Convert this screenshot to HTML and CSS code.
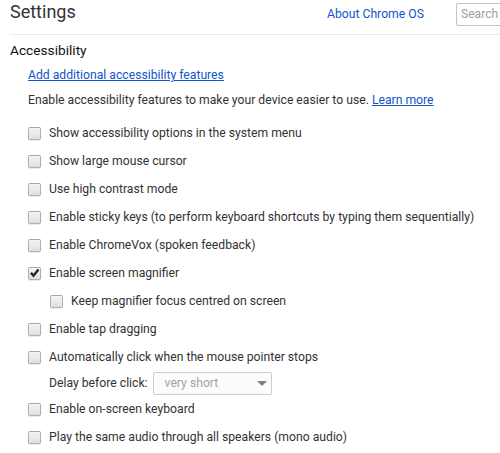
FILE: index.html
```html
<!DOCTYPE html>
<html lang="en">
<head>
<meta charset="utf-8">
<title>Settings</title>
<link rel="stylesheet" href="styles.css">
</head>
<body>
<header class="header">
  <h1 class="title">Settings</h1>
  <a class="about" href="#">About Chrome OS</a>
  <input class="search" type="search" placeholder="Search">
</header>
<main class="page">
  <h2 class="section-title">Accessibility</h2>
  <div class="section-body">
    <a class="link add" href="#">Add additional accessibility features</a>
    <p class="desc">Enable accessibility features to make your device easier to use. <a class="link" href="#">Learn more</a></p>
    <ul class="options">
      <li class="option"><span class="cb"></span><span class="label">Show accessibility options in the system menu</span></li>
      <li class="option"><span class="cb"></span><span class="label">Show large mouse cursor</span></li>
      <li class="option"><span class="cb"></span><span class="label">Use high contrast mode</span></li>
      <li class="option"><span class="cb"></span><span class="label">Enable sticky keys (to perform keyboard shortcuts by typing them sequentially)</span></li>
      <li class="option"><span class="cb"></span><span class="label">Enable ChromeVox (spoken feedback)</span></li>
      <li class="option"><span class="cb checked"><svg viewBox="0 0 13 13" width="13" height="13"><path d="M2 6.6 L4 4.9 L5.4 7 L9.5 1.8 L11.4 3.3 L5.5 10.6 Z" fill="#222"/></svg></span><span class="label">Enable screen magnifier</span></li>
      <li class="option nested"><span class="cb"></span><span class="label">Keep magnifier focus centred on screen</span></li>
      <li class="option"><span class="cb"></span><span class="label">Enable tap dragging</span></li>
      <li class="option"><span class="cb"></span><span class="label">Automatically click when the mouse pointer stops</span></li>
      <li class="delay"><span class="label">Delay before click:</span><span class="select"><span class="select-text">very short</span><span class="arrow"></span></span></li>
      <li class="option"><span class="cb"></span><span class="label">Enable on-screen keyboard</span></li>
      <li class="option"><span class="cb"></span><span class="label">Play the same audio through all speakers (mono audio)</span></li>
    </ul>
  </div>
</main>
</body>
</html>
```
FILE: styles.css
```css
html, body {
  margin: 0;
  padding: 0;
  overflow: hidden;
  background: #fff;
}
body {
  font-family: Roboto, "Liberation Sans", sans-serif;
  font-size: 12.2px;
  line-height: 16px;
  color: #333;
}
.header {
  display: flex;
  align-items: baseline;
  margin-left: 10px;
  height: 34px;
  border-bottom: 1px solid #ebebeb;
  overflow: hidden;
}
.title {
  flex: 0 0 317px;
  margin: 0;
  font-size: 18px;
  line-height: 24px;
  font-weight: normal;
  color: #333;
}
.about {
  flex: none;
  color: #1155cc;
  text-decoration: none;
}
.search {
  flex: none;
  margin-left: 32px;
  width: 160px;
  height: 23px;
  box-sizing: border-box;
  border: 1px solid #c4c4c4;
  border-radius: 2px;
  padding: 0 4px;
  font-family: Roboto, "Liberation Sans", sans-serif;
  font-size: 12.2px;
  color: #333;
  outline: none;
  -webkit-appearance: none;
  appearance: none;
}
.search::placeholder {
  color: #a0a0a0;
}
.section-title {
  margin: 5px 0 0 10px;
  font-size: 13.7px;
  line-height: 20px;
  font-weight: normal;
  color: #111;
}
.section-body {
  display: flex;
  flex-direction: column;
  align-items: flex-start;
  padding-left: 28px;
}
.link {
  color: #1155cc;
  text-decoration: underline;
}
.add {
  margin-top: 7px;
}
.desc {
  margin: 9px 0 0;
}
.options {
  list-style: none;
  margin: 11px 0 0;
  padding: 0;
}
.option {
  display: flex;
  align-items: center;
  gap: 8px;
  height: 28px;
}
.option.nested {
  padding-left: 22px;
}
.cb {
  flex: none;
  display: block;
  width: 13px;
  height: 13px;
  box-sizing: border-box;
  border: 1px solid rgba(0, 0, 0, 0.25);
  border-radius: 2px;
  background-image: linear-gradient(#ededed, #ededed 38%, #dedede);
  box-shadow: 0 1px 0 rgba(0, 0, 0, 0.08), inset 0 1px 2px rgba(255, 255, 255, 0.75);
  position: relative;
}
.cb svg {
  position: absolute;
  left: -1px;
  top: -1px;
}
.delay {
  display: flex;
  align-items: center;
  gap: 5px;
  height: 24px;
  padding-left: 21px;
}
.select {
  display: flex;
  align-items: center;
  justify-content: space-between;
  width: 119px;
  height: 23px;
  box-sizing: border-box;
  border: 1px solid #cdcdcd;
  border-radius: 2px;
  padding: 0 4px 0 11px;
  background: #fcfcfc;
  color: #a3a3a3;
}
.arrow {
  width: 0;
  height: 0;
  border-left: 5px solid transparent;
  border-right: 5px solid transparent;
  border-top: 5px solid #808080;
}
```
